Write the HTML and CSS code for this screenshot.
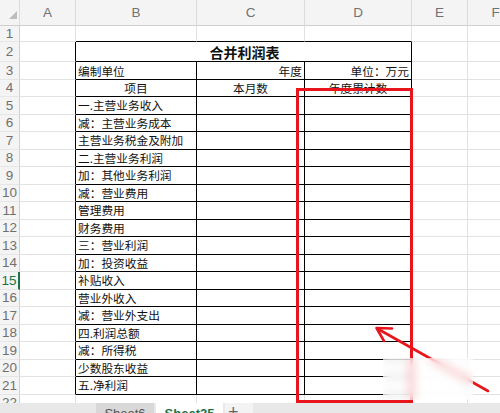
FILE: index.html
```html
<!DOCTYPE html>
<html lang="zh-CN">
<head>
    <meta charset="UTF-8">
    <title>合并利润表</title>
    <link rel="stylesheet" href="styles.css">
</head>
<body>

<div class="sheet">
    <table class="grid">
        <colgroup>
            <col style="width:20px">
            <col style="width:56px">
            <col style="width:121px">
            <col style="width:108px">
            <col style="width:107px">
            <col style="width:56px">
            <col style="width:56px">
        </colgroup>
        <thead>
            <tr class="h-head">
                <th class="corner">
                    <svg width="20" height="25" viewBox="0 0 20 25"><polygon points="17,11 17,19 9,19" fill="#bdbdbd"/></svg>
                </th>
                <th>A</th><th>B</th><th>C</th><th>D</th><th>E</th><th>F</th>
            </tr>
        </thead>
        <tbody>
            <tr class="h1">
                <td class="num">1</td><td></td><td class="top"></td><td class="top"></td><td class="top"></td><td></td><td></td>
            </tr>
            <tr class="h2">
                <td class="num">2</td><td class="edge"></td>
                <td class="r title" colspan="3">合并利润表</td>
                <td></td><td></td>
            </tr>
            <tr class="h3">
                <td class="num">3</td><td class="edge"></td>
                <td class="r">编制单位</td><td class="r right">年度</td><td class="r right">单位：万元</td>
                <td></td><td></td>
            </tr>
            <tr class="h4">
                <td class="num">4</td><td class="edge"></td>
                <td class="r center">项目</td><td class="r center">本月数</td><td class="r center">年度累计数</td>
                <td></td><td></td>
            </tr>
            <tr class="row"><td class="num">5</td><td class="edge"></td><td class="r">一.主营业务收入</td><td class="r"></td><td class="r"></td><td></td><td></td></tr>
            <tr class="row"><td class="num">6</td><td class="edge"></td><td class="r">减：主营业务成本</td><td class="r"></td><td class="r"></td><td></td><td></td></tr>
            <tr class="row"><td class="num">7</td><td class="edge"></td><td class="r">主营业务税金及附加</td><td class="r"></td><td class="r"></td><td></td><td></td></tr>
            <tr class="row"><td class="num">8</td><td class="edge"></td><td class="r">二.主营业务利润</td><td class="r"></td><td class="r"></td><td></td><td></td></tr>
            <tr class="row"><td class="num">9</td><td class="edge"></td><td class="r">加：其他业务利润</td><td class="r"></td><td class="r"></td><td></td><td></td></tr>
            <tr class="row"><td class="num">10</td><td class="edge"></td><td class="r">减：营业费用</td><td class="r"></td><td class="r"></td><td></td><td></td></tr>
            <tr class="row"><td class="num">11</td><td class="edge"></td><td class="r">管理费用</td><td class="r"></td><td class="r"></td><td></td><td></td></tr>
            <tr class="row"><td class="num">12</td><td class="edge"></td><td class="r">财务费用</td><td class="r"></td><td class="r"></td><td></td><td></td></tr>
            <tr class="row"><td class="num">13</td><td class="edge"></td><td class="r">三：营业利润</td><td class="r"></td><td class="r"></td><td></td><td></td></tr>
            <tr class="row"><td class="num">14</td><td class="edge"></td><td class="r">加：投资收益</td><td class="r"></td><td class="r"></td><td></td><td></td></tr>
            <tr class="row"><td class="num active">15</td><td class="edge"></td><td class="r">补贴收入</td><td class="r"></td><td class="r"></td><td></td><td></td></tr>
            <tr class="row"><td class="num">16</td><td class="edge"></td><td class="r">营业外收入</td><td class="r"></td><td class="r"></td><td></td><td></td></tr>
            <tr class="row"><td class="num">17</td><td class="edge"></td><td class="r">减：营业外支出</td><td class="r"></td><td class="r"></td><td></td><td></td></tr>
            <tr class="row"><td class="num">18</td><td class="edge"></td><td class="r">四.利润总额</td><td class="r"></td><td class="r"></td><td></td><td></td></tr>
            <tr class="row"><td class="num">19</td><td class="edge"></td><td class="r">减：所得税</td><td class="r"></td><td class="r"></td><td></td><td></td></tr>
            <tr class="row"><td class="num">20</td><td class="edge"></td><td class="r">少数股东收益</td><td class="r"></td><td class="r"></td><td></td><td></td></tr>
            <tr class="row"><td class="num">21</td><td class="edge"></td><td class="r">五.净利润</td><td class="r"></td><td class="r"></td><td></td><td></td></tr>
            <tr class="row"><td class="num">22</td><td></td><td></td><td></td><td></td><td></td><td></td></tr>
        </tbody>
    </table>
</div>

<div class="tabs">
    <div class="tab">Sheet6</div>
    <div class="tab current">Sheet25</div>
    <div class="tab add">+</div>
</div>

<!-- 标注 -->
<div class="mark-box"></div>
<svg class="mark-arrow" width="500" height="413" viewBox="0 0 500 413">
    <line x1="488" y1="391" x2="378" y2="329" stroke="#e8161c" stroke-width="2.6" stroke-linecap="round"/>
    <polyline points="392,328.5 376.5,328 384,341" fill="none" stroke="#e8161c" stroke-width="2.6" stroke-linecap="round" stroke-linejoin="round"/>
</svg>
<div class="blur"></div>

</body>
</html>
```

FILE: styles.css
```css
* {
    box-sizing: border-box;
}

html, body {
    margin: 0;
    padding: 0;
    overflow: hidden;
}

body {
    width: 500px;
    height: 413px;
    position: relative;
    background: #fff;
    font-family: "Noto Sans CJK SC", sans-serif;
    color: #111;
}

.sheet {
    height: 403px;
    overflow: hidden;
}

.grid {
    border-collapse: separate;
    border-spacing: 0;
    table-layout: fixed;
    width: 524px;
}

.grid th, .grid td {
    padding: 0;
    border-right: 1px solid #e2e2e2;
    border-bottom: 1px solid #e2e2e2;
    font-size: 11.7px;
    font-weight: normal;
    line-height: 1;
    white-space: nowrap;
    overflow: hidden;
    vertical-align: middle;
}

.grid th {
    background: #f4f4f4;
    color: #727272;
    font-family: "Liberation Sans", sans-serif;
    font-size: 13.5px;
    border-bottom-color: #d0d0d0;
    border-right-color: #dcdcdc;
}

.grid th.corner {
    padding: 0;
    line-height: 0;
}

.h-head { height: 25px; }
.h1 { height: 16px; }
.h2 { height: 20px; }
.h3 { height: 18px; }
.h4 { height: 17px; }
.row { height: 17.5px; }

.grid td.num {
    background: #f4f4f4;
    color: #707070;
    font-family: "Liberation Sans", sans-serif;
    font-size: 13.5px;
    text-align: center;
    border-right-color: #d0d0d0;
    border-bottom-color: #e6e6e6;
}

.grid td.num.active {
    color: #217346;
    border-right: 2px solid #217346;
}

.grid td.top {
    border-bottom-color: #000;
}

.grid td.edge {
    border-right-color: #000;
}

.grid td.r {
    border-right-color: #000;
    border-bottom-color: #000;
    padding-left: 2px;
}

.grid td.title {
    text-align: center;
    font-weight: bold;
    font-size: 14px;
}

.grid td.right {
    text-align: right;
    padding-right: 2px;
}

.grid td.center {
    text-align: center;
    padding-left: 0;
}

.tabs {
    height: 30px;
    background: #e8e8e8;
    display: flex;
    gap: 2px;
    padding-left: 96px;
}

.tab {
    width: 58px;
    padding-top: 3px;
    background: #d8d8d8;
    color: #555;
    font-family: "Liberation Sans", sans-serif;
    font-size: 13px;
    text-align: center;
}

.tab.current {
    width: 67px;
    background: #fff;
    color: #217346;
    font-weight: bold;
}

.tab.add {
    width: 28px;
    background: #f3f3f3;
    color: #666;
    font-size: 18px;
    padding-top: 0;
    line-height: 1;
    text-align: left;
    padding-left: 3px;
}

.mark-box {
    position: absolute;
    left: 296px;
    top: 88px;
    width: 117px;
    height: 315px;
    border: 3px solid #e8161c;
}

.mark-arrow {
    position: absolute;
    left: 0;
    top: 0;
    pointer-events: none;
}

.blur {
    position: absolute;
    left: 383px;
    top: 358px;
    width: 90px;
    height: 42px;
    background: rgba(255, 255, 255, 0.55);
    backdrop-filter: blur(5px);
}
```
